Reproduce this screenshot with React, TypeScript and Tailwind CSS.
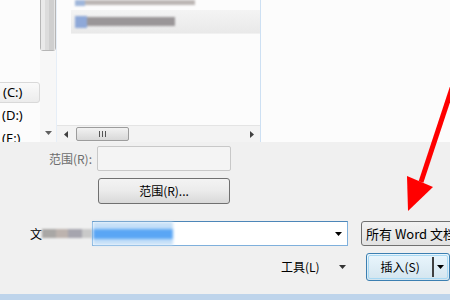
import React from "react"

const Tri = ({ dir, className }: { dir: "up" | "down" | "left" | "right"; className?: string }) => {
  const pts = {
    down: "0,0 7,0 3.5,4",
    up: "0,4 7,4 3.5,0",
    left: "4,0 4,7 0,3.5",
    right: "0,0 0,7 4,3.5",
  }[dir]
  const w = dir === "down" || dir === "up" ? 7 : 4
  const h = dir === "down" || dir === "up" ? 4 : 7
  return (
    <svg width={w} height={h} viewBox={`0 0 ${w} ${h}`} className={"shrink-0 " + (className ?? "")}>
      <polygon points={pts} fill="currentColor" />
    </svg>
  )
}

const App = () => {
  return (
    <div className="relative w-[450px] h-[300px] overflow-hidden bg-[#f0f0f0] text-[12px] text-black font-['Noto_Sans','Noto_Sans_CJK_SC',sans-serif]">
      {/* top: browse area */}
      <div className="flex h-[142px] bg-[#fcfcfc] overflow-hidden">
        {/* nav tree */}
        <div className="w-[40px] shrink-0 flex flex-col pt-[82px] text-[13px]">
          <div className="h-[21px] shrink-0 -ml-[4px] pl-[6px] flex items-center border border-[#d9d9d9] rounded-r-[3px] bg-gradient-to-b from-[#fafafa] to-[#ececec] leading-none">(C:)</div>
          <div className="h-[24px] shrink-0 pl-[2px] flex items-center leading-none">(D:)</div>
          <div className="h-[22px] shrink-0 pl-[2px] flex items-center leading-none">(E:)</div>
        </div>
        {/* vertical scrollbar */}
        <div className="w-[17px] shrink-0 flex flex-col items-center bg-[#f7f7f7] border-r border-[#e6eef7]">
          <div className="w-[16px] h-[53px] shrink-0 -mt-[2px] border border-[#b6b6b6] rounded-b-[3px] flex">
            <div className="w-[4px] bg-[#eaeaea]" />
            <div className="w-[4px] bg-[#dcdcdc]" />
            <div className="w-[5px] bg-[#cfcfcf]" />
            <div className="flex-1 bg-[#e4e4e4]" />
          </div>
          <div className="flex-1" />
          <Tri dir="down" className="text-[#606060] mb-[7px]" />
        </div>
        {/* file list */}
        <div className="w-[204px] shrink-0 flex flex-col border-r border-[#cde0f3]">
          <div className="flex-1 flex flex-col">
            <div className="h-[9px] flex items-start pl-[18px] blur-[1.2px]">
              <div className="w-[10px] h-[6px] bg-[#9fb6da]" />
              <div className="w-[110px] h-[5px] bg-[#bcb6b4]" />
            </div>
            <div className="ml-[14px] h-[24px] mt-[1px] flex items-center pl-[4px] bg-gradient-to-b from-[#f4f4f4] to-[#e9e9e9] border-b border-[#f1f1f1]">
              <div className="flex items-center blur-[1.2px]">
                <div className="w-[12px] h-[12px] bg-[#8ea8d8]" />
                <div className="w-[88px] h-[9px] bg-[#9a9698]" />
              </div>
            </div>
          </div>
          <div className="h-[17px] shrink-0 flex items-center border-t border-[#e4e4e4] bg-[#f3f3f3]">
            <Tri dir="left" className="text-[#404040] ml-[7px]" />
            <div className="ml-[8px] w-[53px] h-[14px] border border-[#9c9c9c] rounded-[2px] bg-gradient-to-b from-[#f2f2f2] to-[#d8d8d8] flex items-center justify-center gap-[2px]">
              <div className="w-px h-[6px] bg-[#555]" />
              <div className="w-px h-[6px] bg-[#555]" />
              <div className="w-px h-[6px] bg-[#555]" />
            </div>
            <div className="flex-1" />
            <Tri dir="right" className="text-[#404040] mr-[6px]" />
          </div>
        </div>
        <div className="flex-1" />
      </div>

      {/* bottom: options */}
      <div className="flex flex-col h-[152px]">
        <div className="flex items-center mt-[4px] h-[25px]">
          <div className="w-[92px] shrink-0 text-right text-[#6d6d6d] font-['Noto_Sans_CJK_SC',sans-serif]">范围(R):</div>
          <div className="ml-[5px] w-[134px] shrink-0 h-[25px] border border-[#c8c8c8] rounded-[2px] bg-[#f4f4f4]" />
        </div>
        <div className="ml-[98px] mt-[7px] w-[132px] h-[26px] border border-[#707070] rounded-[3px] bg-gradient-to-b from-[#f3f3f3] via-[#ebebeb] to-[#d9d9d9] flex items-center justify-center font-['Noto_Sans_CJK_SC',sans-serif]">
          范围(R)...
        </div>
        <div className="flex items-center mt-[17px] h-[25px]">
          <div className="ml-[30px] w-[12px] shrink-0 font-['Noto_Sans_CJK_SC',sans-serif]">文</div>
          <div className="w-[50px] shrink-0 h-[9px] flex blur-[1.2px]">
            <div className="w-[14px] bg-[#a9a7a5]" />
            <div className="w-[12px] bg-[#bdb3ae]" />
            <div className="w-[14px] bg-[#a6a5ae]" />
            <div className="flex-1 bg-[#c9c9c9]" />
          </div>
          <div className="w-[256px] shrink-0 h-[25px] border border-[#7fb0dc] border-t-[#4d86b8] bg-white flex items-center">
            <div className="w-[80px] h-[23px] bg-[#c6e0f8] flex items-center blur-[1.4px]">
              <div className="w-[80px] h-[10px] bg-[#5aa6f5]" />
            </div>
            <div className="flex-1" />
            <Tri dir="down" className="text-black mr-[5px]" />
          </div>
          <div className="ml-[13px] w-[110px] shrink-0 h-[25px] pl-[4px] border border-[#707070] rounded-[3px] bg-gradient-to-b from-[#f2f2f2] to-[#e2e2e2] flex items-center whitespace-nowrap text-[13px] font-['Noto_Sans_CJK_SC',sans-serif]">
            所有 Word 文档
          </div>
        </div>
        <div className="flex items-center mt-[7px] h-[28px]">
          <div className="ml-[281px] shrink-0 font-['Noto_Sans_CJK_SC',sans-serif]">工具(L)</div>
          <Tri dir="down" className="text-[#333] ml-[19px]" />
          <div className="ml-[20px] w-[84px] shrink-0 h-[28px] border border-[#3c7fb1] rounded-[3px] bg-gradient-to-b from-[#eaf6fd] to-[#d3e5ef] p-px">
            <div className="h-full border border-[#a7d8f3] rounded-[2px] flex items-center">
              <div className="flex-1 text-center font-['Noto_Sans_CJK_SC',sans-serif]">插入(S)</div>
              <div className="w-[2px] h-[20px] bg-[#404040]" />
              <Tri dir="down" className="text-black mx-[3px]" />
            </div>
          </div>
        </div>
      </div>
      <div className="h-[6px] bg-[#bed4eb]" />

      {/* red annotation arrow */}
      <svg className="absolute left-0 top-0 pointer-events-none" width="450" height="300">
        <line x1="458" y1="70" x2="421" y2="182" stroke="#ff0000" strokeWidth="5" />
        <polygon points="407,176 433,187 408,211" fill="#ff0000" />
      </svg>
    </div>
  )
}

export default App
